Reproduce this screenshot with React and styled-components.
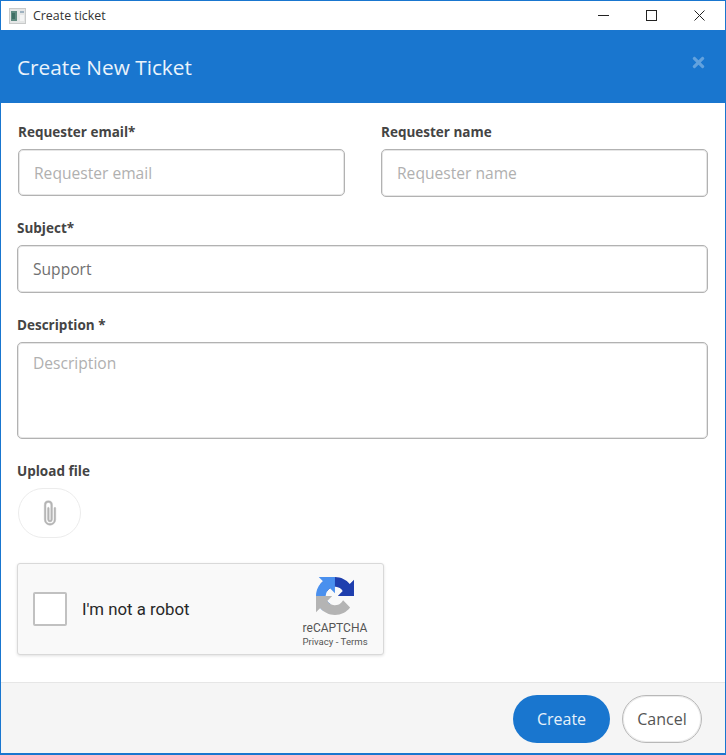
import React from "react";
import styled, { createGlobalStyle } from "styled-components";
import { BsPaperclip } from "react-icons/bs";
import { FaTimes } from "react-icons/fa";

const GlobalStyle = createGlobalStyle`
  html, body {
    margin: 0;
    padding: 0;
    background: #fff;
  }
  * {
    box-sizing: border-box;
  }
`;

const AppIcon = () => (
  <svg width="17" height="16" viewBox="0 0 17 16">
    <rect x="0.5" y="0.5" width="16" height="15" fill="#e4e6e6" stroke="#c8caca" />
    <rect x="2" y="3" width="6" height="10" fill="#5f8a80" />
    <rect x="3" y="5" width="3" height="6" fill="#3f6f65" />
    <rect x="11" y="3" width="4" height="2" fill="#9fb2c0" />
    <rect x="11" y="7" width="4" height="6" fill="#f3f4f4" />
  </svg>
);

const MinimizeIcon = () => (
  <svg width="11" height="11" viewBox="0 0 11 11">
    <path d="M0 5.5h11" stroke="#222" strokeWidth="1" />
  </svg>
);

const MaximizeIcon = () => (
  <svg width="11" height="11" viewBox="0 0 11 11">
    <rect x="0.5" y="0.5" width="10" height="10" fill="none" stroke="#222" />
  </svg>
);

const CloseIcon = () => (
  <svg width="11" height="11" viewBox="0 0 11 11">
    <path d="M0.5 0.5l10 10M10.5 0.5l-10 10" stroke="#222" strokeWidth="1" />
  </svg>
);

const RecaptchaLogo = () => (
  <svg width="38" height="38" viewBox="0 0 64 64">
    <path
      d="M64 31.955l-.033-1.37V4.687l-7.16 7.16C50.948 4.674 42.033.097 32.05.097c-10.4 0-19.622 4.96-25.458 12.64l11.736 11.86a15.55 15.55 0 0 1 4.754-5.334c2.05-1.6 4.952-2.906 8.968-2.906.485 0 .86.057 1.135.163 4.976.393 9.288 3.14 11.828 7.124l-8.307 8.307L63.997 32"
      fill="#1f3fae"
    />
    <path
      d="M31.9 0l-1.37.033H4.63l7.16 7.16C4.617 13.052.04 21.967.04 31.95c0 10.4 4.96 19.622 12.64 25.458l11.86-11.736a15.55 15.55 0 0 1-5.334-4.754c-1.6-2.05-2.906-4.952-2.906-8.968 0-.485.057-.86.163-1.135.393-4.976 3.14-9.288 7.124-11.828l8.307 8.307L31.953.003"
      fill="#4a90ee"
    />
    <path
      d="M0 31.95l.033 1.37v25.898l7.16-7.16c5.86 7.173 14.775 11.75 24.757 11.75 10.4 0 19.622-4.96 25.458-12.64l-11.736-11.86a15.55 15.55 0 0 1-4.754 5.334c-2.05 1.6-4.952 2.906-8.968 2.906-.485 0-.86-.057-1.135-.163-4.976-.393-9.288-3.14-11.828-7.124l8.307-8.307L.003 31.95"
      fill="#b4b4b4"
    />
  </svg>
);

const App = () => {
  return (
    <>
      <GlobalStyle />
      <Window>
        <TitleBar>
          <TitleLeft>
            <AppIcon />
            <TitleText>Create ticket</TitleText>
          </TitleLeft>
          <WindowControls>
            <MinimizeIcon />
            <MaximizeIcon />
            <CloseIcon />
          </WindowControls>
        </TitleBar>

        <Header>
          <HeaderTitle>Create New Ticket</HeaderTitle>
          <HeaderClose>
            <FaTimes />
          </HeaderClose>
        </Header>

        <Form>
          <TopRow>
            <div>
              <Label>Requester email*</Label>
              <Input placeholder="Requester email" />
            </div>
            <div>
              <Label>Requester name</Label>
              <Input placeholder="Requester name" $tall />
            </div>
          </TopRow>

          <Field>
            <Label>Subject*</Label>
            <Input defaultValue="Support" $tall />
          </Field>

          <Field>
            <Label>Description *</Label>
            <TextArea placeholder="Description" />
          </Field>

          <Label>Upload file</Label>
          <UploadButton>
            <BsPaperclip />
          </UploadButton>

          <Captcha>
            <CheckBox />
            <CaptchaText>I'm not a robot</CaptchaText>
            <CaptchaBrand>
              <RecaptchaLogo />
              <BrandName>reCAPTCHA</BrandName>
              <BrandLinks>Privacy - Terms</BrandLinks>
            </CaptchaBrand>
          </Captcha>
        </Form>

        <Footer>
          <CreateButton>Create</CreateButton>
          <CancelButton>Cancel</CancelButton>
        </Footer>
      </Window>
    </>
  );
};

const uiFont = `"Open Sans", "Noto Sans", sans-serif`;

const Window = styled.div`
  width: 726px;
  height: 755px;
  display: flex;
  flex-direction: column;
  border: 1px solid #1976cf;
  border-bottom-width: 2px;
  background: #fff;
  font-family: ${uiFont};
  overflow: hidden;
`;

const TitleBar = styled.div`
  height: 29px;
  flex: none;
  display: flex;
  align-items: center;
  justify-content: space-between;
  padding: 0 20px 0 8px;
`;

const TitleLeft = styled.div`
  display: flex;
  align-items: center;
  gap: 7px;
`;

const TitleText = styled.span`
  font-size: 12.4px;
  color: #333;
`;

const WindowControls = styled.div`
  display: flex;
  align-items: center;
  gap: 37px;
`;

const Header = styled.div`
  height: 73px;
  flex: none;
  display: flex;
  justify-content: space-between;
  background: #1976cf;
  padding: 0 18px 0 16px;
`;

const HeaderTitle = styled.h1`
  margin: 0;
  align-self: center;
  font-size: 20.8px;
  font-weight: 400;
  color: #eaf3fb;
`;

const HeaderClose = styled.span`
  margin-top: 24px;
  font-size: 17px;
  line-height: 1;
  color: rgba(255, 255, 255, 0.32);
`;

const Form = styled.div`
  flex: 1;
  display: flex;
  flex-direction: column;
  align-items: stretch;
  padding: 20px 17px 0 16px;
`;

const TopRow = styled.div`
  display: grid;
  grid-template-columns: 327px 327px;
  column-gap: 36px;
  margin: 0 0 22px 1px;
`;

const Field = styled.div`
  margin-bottom: 23px;
`;

const Label = styled.label`
  display: block;
  height: 18px;
  margin-bottom: 8px;
  font-size: 13.5px;
  line-height: 18px;
  font-weight: 700;
  color: #444;
`;

const Input = styled.input`
  display: block;
  width: 100%;
  height: ${(props) => (props.$tall ? "48px" : "47px")};
  padding: 0 15px;
  border: 1px solid #b2b2b2;
  border-radius: 5px;
  box-shadow: inset 0 0 0 1px #e6e6e6;
  outline: none;
  background: #fff;
  font-family: ${uiFont};
  font-size: 15.6px;
  color: #707070;

  &::placeholder {
    color: #b0b0b0;
    opacity: 1;
  }
`;

const TextArea = styled.textarea`
  display: block;
  width: 100%;
  height: 97px;
  padding: 9px 15px;
  border: 1px solid #b2b2b2;
  border-radius: 5px;
  box-shadow: inset 0 0 0 1px #e6e6e6;
  outline: none;
  resize: none;
  font-family: ${uiFont};
  font-size: 15.6px;
  color: #707070;

  &::placeholder {
    color: #b0b0b0;
    opacity: 1;
  }
`;

const UploadButton = styled.div`
  width: 63px;
  height: 50px;
  margin-left: 1px;
  display: flex;
  align-items: center;
  justify-content: center;
  border: 1px solid #ececec;
  border-radius: 25px;
  font-size: 26px;
  color: #b4b4b4;

  svg {
    stroke: #b4b4b4;
    stroke-width: 0.3px;
  }
`;

const Captcha = styled.div`
  width: 367px;
  height: 92px;
  margin-top: 25px;
  display: flex;
  align-items: center;
  background: #f9f9f9;
  border: 1px solid #d9d9d9;
  border-radius: 3px;
  box-shadow: 0 1px 3px rgba(0, 0, 0, 0.12);
  padding: 0 15px;
`;

const CheckBox = styled.div`
  width: 34px;
  height: 34px;
  flex: none;
  background: #fff;
  border: 2px solid #c1c1c1;
  border-radius: 2px;
`;

const CaptchaText = styled.span`
  margin-left: 15px;
  flex: 1;
  font-family: Roboto, sans-serif;
  font-size: 16.8px;
  color: #282828;
`;

const CaptchaBrand = styled.div`
  width: 66px;
  margin-top: 6px;
  display: flex;
  flex-direction: column;
  align-items: center;
  font-family: Roboto, sans-serif;
  color: #555;
`;

const BrandName = styled.span`
  margin-top: 6px;
  font-size: 12px;
  line-height: 14px;
`;

const BrandLinks = styled.span`
  font-size: 9.6px;
  line-height: 13px;
  white-space: nowrap;
`;

const Footer = styled.div`
  height: 71px;
  flex: none;
  display: flex;
  justify-content: flex-end;
  gap: 12px;
  padding: 12px 23px 0 0;
  background: #f5f5f5;
  border-top: 1px solid #e6e6e6;
`;

const CreateButton = styled.button`
  width: 97px;
  height: 48px;
  border: none;
  border-radius: 24px;
  background: #1976cf;
  font-family: ${uiFont};
  font-size: 16px;
  color: #e6f1fa;
`;

const CancelButton = styled.button`
  width: 80px;
  height: 48px;
  border: 1px solid #b8b8b8;
  border-radius: 24px;
  box-shadow: inset 0 0 0 1px #ececec;
  background: #fff;
  font-family: ${uiFont};
  font-size: 16px;
  color: #555;
`;

export default App;
